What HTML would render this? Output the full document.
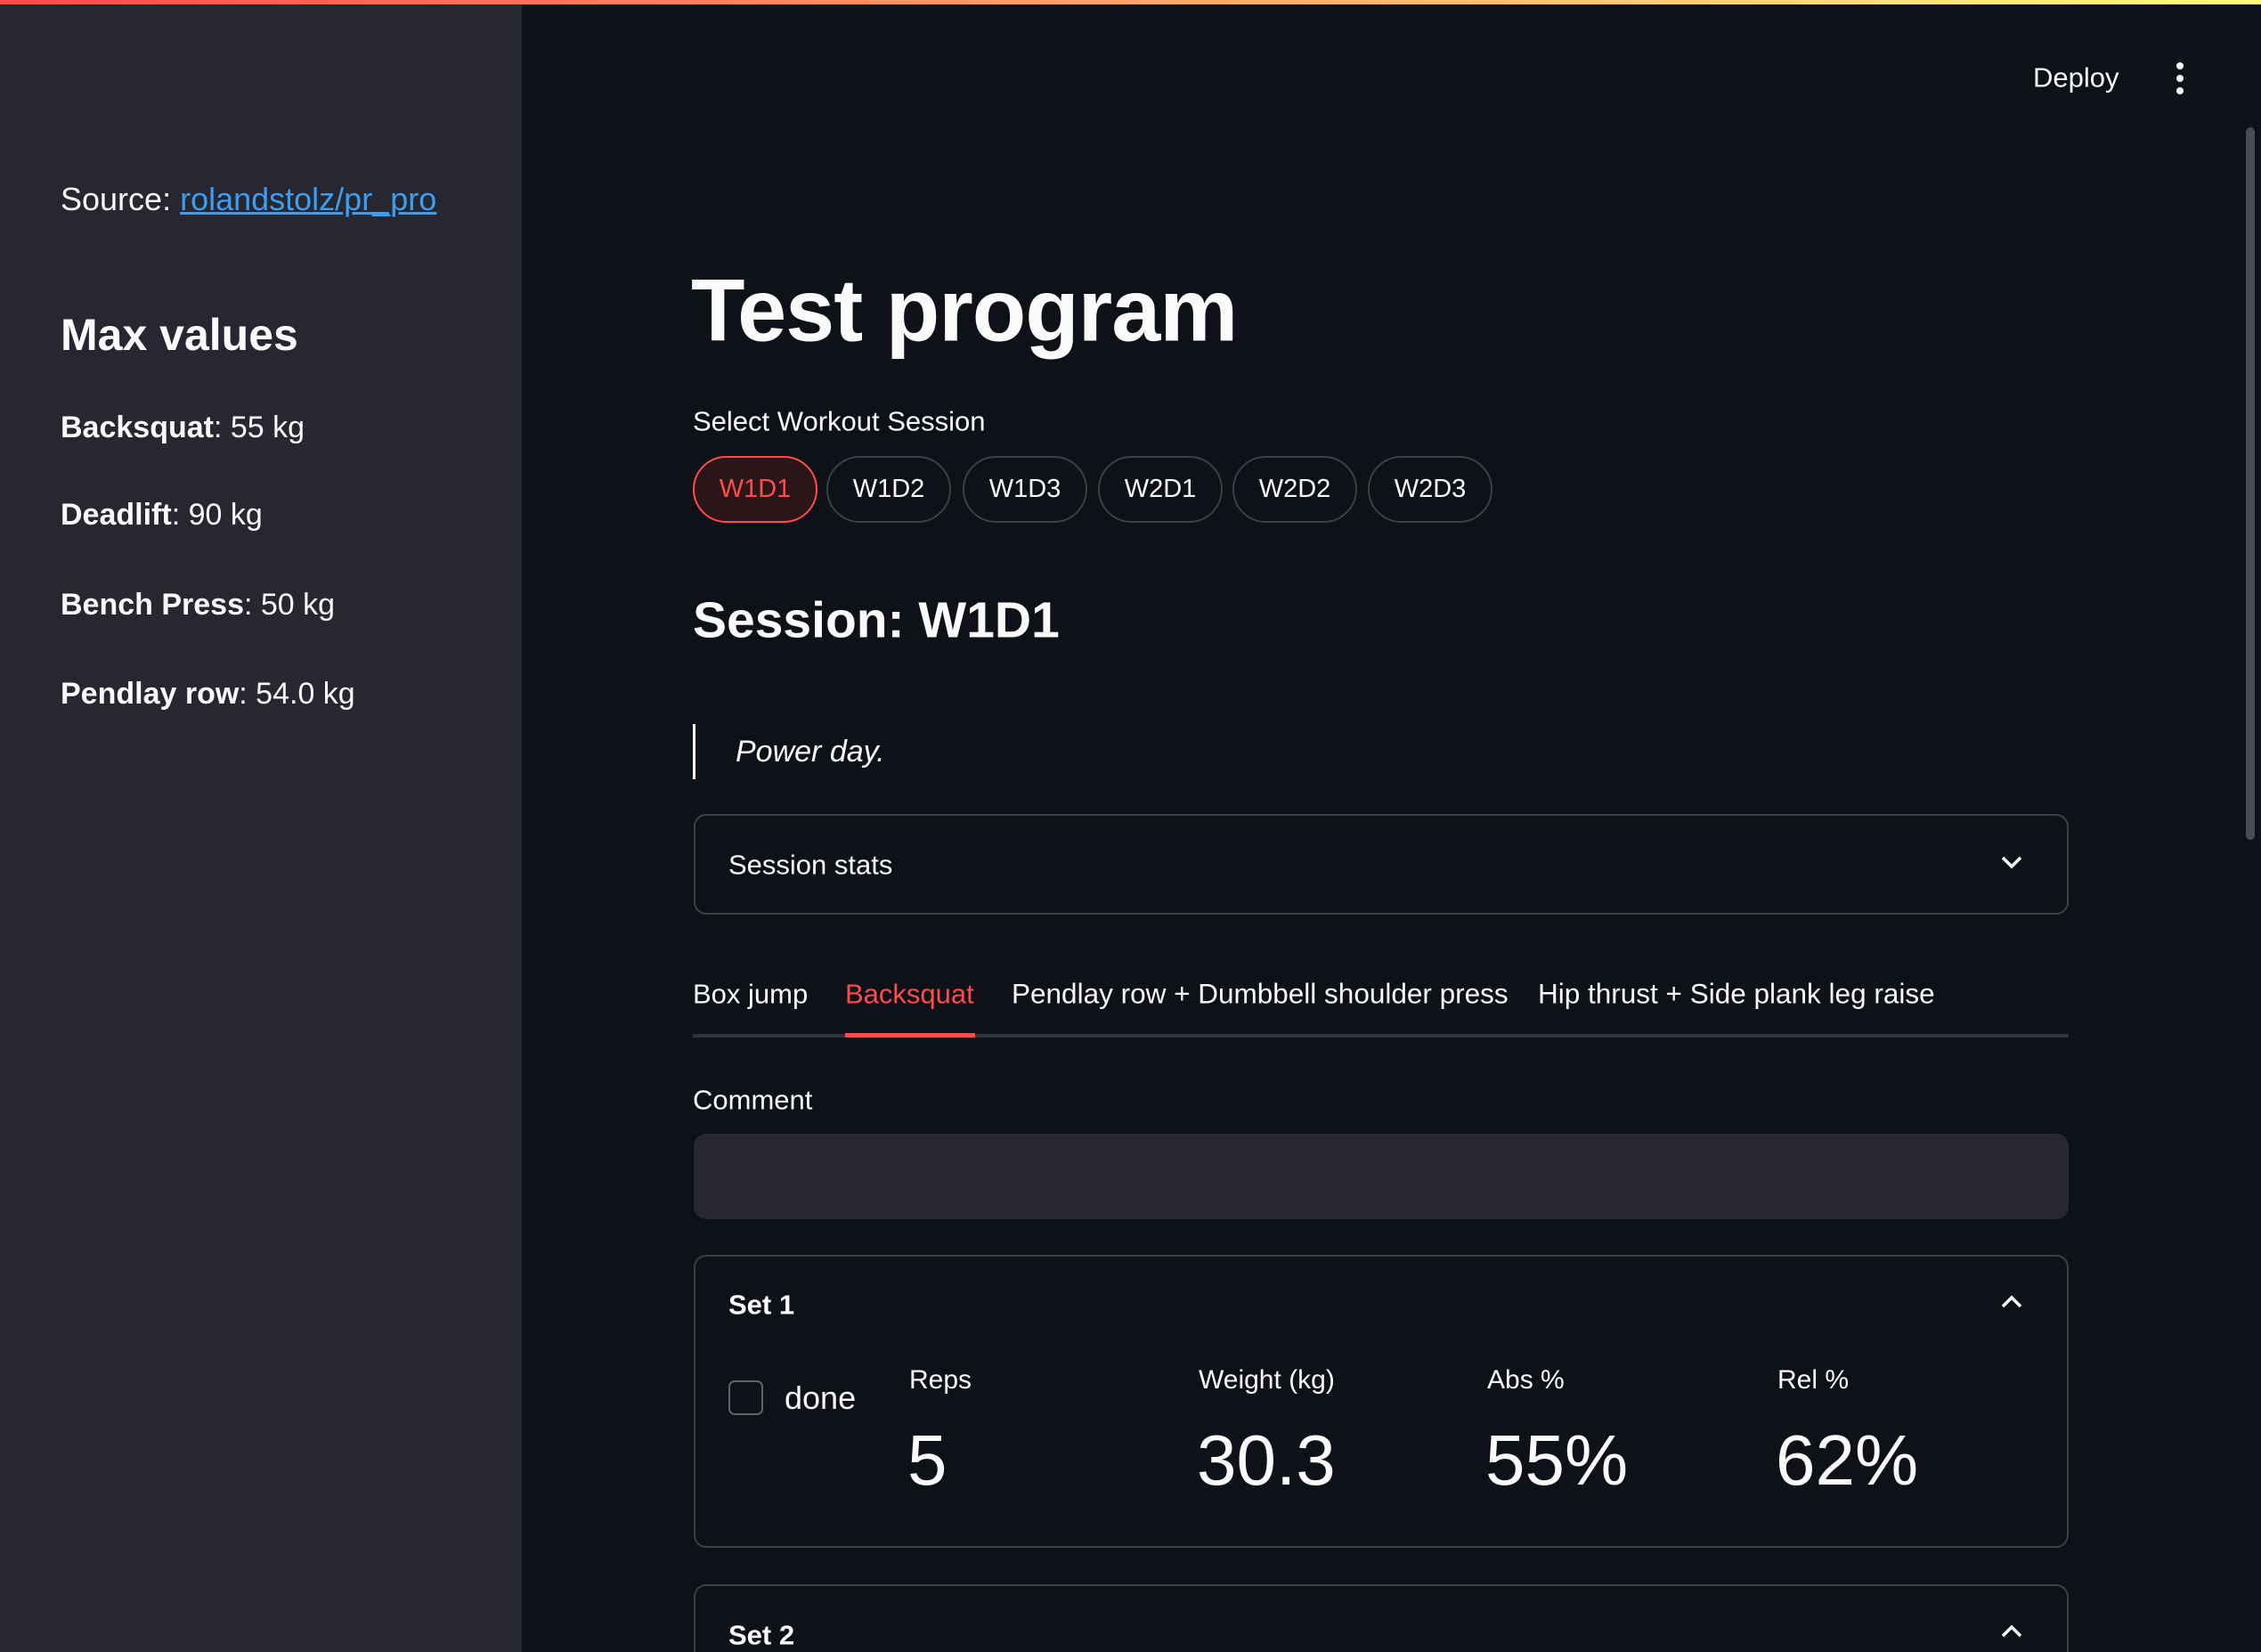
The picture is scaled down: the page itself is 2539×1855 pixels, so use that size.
<!DOCTYPE html>
<html><head><meta charset="utf-8"><style>
*{margin:0;padding:0;box-sizing:border-box}
html,body{width:2539px;height:1855px;overflow:hidden;background:#0e1117;color:#fafafa;font-family:"Liberation Sans",sans-serif}
#w{position:relative;width:2539px;height:1855px;overflow:hidden}
.a{position:absolute;white-space:nowrap}
.topbar{position:absolute;left:0;top:0;width:2539px;height:5px;background:linear-gradient(90deg,#ff4b4b,#fffd80)}
.side{position:absolute;left:0;top:5px;width:586px;height:1850px;background:#262730}
.t{font-size:31px;line-height:1;transform:translateY(-50%)}
.s{font-size:34px}
.pill{position:absolute;top:512px;height:75px;width:140px;border:2px solid rgba(250,250,250,0.2);border-radius:38px;font-size:29px;display:flex;align-items:center;justify-content:center}
.box{position:absolute;left:779px;width:1544px;border:2px solid rgba(250,250,250,0.2);border-radius:14px}
.lbl{font-size:30px}
.val{font-size:80px}
</style></head><body><div id="w">
<div class="topbar"></div>
<div class="side"></div>
<div class="a t" style="left:68px;top:224px;font-size:36px">Source: <span style="color:#3d9df3;text-decoration:underline">rolandstolz/pr_pro</span></div>
<div class="a t" style="left:68px;top:376px;font-size:50px;font-weight:bold">Max values</div>
<div class="a t s" style="left:68px;top:480px"><b>Backsquat</b>: 55 kg</div>
<div class="a t s" style="left:68px;top:578px"><b>Deadlift</b>: 90 kg</div>
<div class="a t s" style="left:68px;top:679px"><b>Bench Press</b>: 50 kg</div>
<div class="a t s" style="left:68px;top:779px"><b>Pendlay row</b>: 54.0 kg</div>

<div class="a t" style="left:2283px;top:87px">Deploy</div>
<svg class="a" style="left:2440px;top:68px" width="16" height="40"><circle cx="8" cy="6" r="4" fill="#fafafa"/><circle cx="8" cy="20" r="4" fill="#fafafa"/><circle cx="8" cy="34" r="4" fill="#fafafa"/></svg>
<div class="a" style="left:2522px;top:143px;width:10px;height:800px;border-radius:5px;background:#4a4c55"></div>

<div class="a t" style="left:776px;top:348px;font-size:99px;font-weight:bold;letter-spacing:-1px">Test program</div>
<div class="a t lbl" style="left:778px;top:473px;font-size:31px">Select Workout Session</div>
<div class="pill" style="left:778px;border-color:#ff4b4b;color:#ff4b4b;background:#2a1619">W1D1</div>
<div class="pill" style="left:928px">W1D2</div>
<div class="pill" style="left:1081px">W1D3</div>
<div class="pill" style="left:1233px">W2D1</div>
<div class="pill" style="left:1384px">W2D2</div>
<div class="pill" style="left:1536px">W2D3</div>
<div class="a t" style="left:778px;top:697px;font-size:57px;font-weight:bold">Session: W1D1</div>
<div class="a" style="left:778px;top:813px;width:3px;height:62px;background:#fafafa"></div>
<div class="a t" style="left:826px;top:844px;font-style:italic;font-size:34px">Power day.</div>

<div class="box" style="top:914px;height:113px"></div>
<div class="a t" style="left:818px;top:971px;font-size:31px">Session stats</div>
<svg class="a" style="left:2245px;top:958px" width="28" height="20"><path d="M4 5 L14 15 L24 5" fill="none" stroke="#fafafa" stroke-width="3.5"/></svg>

<div class="a t" style="left:778px;top:1116px;font-size:31px">Box jump</div>
<div class="a t" style="left:949px;top:1116px;font-size:31px;color:#ff4b4b">Backsquat</div>
<div class="a t" style="left:1136px;top:1116px;font-size:31.5px">Pendlay row + Dumbbell shoulder press</div>
<div class="a t" style="left:1727px;top:1116px;font-size:31.5px">Hip thrust + Side plank leg raise</div>
<div class="a" style="left:778px;top:1161px;width:1545px;height:4px;background:#31333f"></div>
<div class="a" style="left:949px;top:1160px;width:146px;height:5px;background:#ff4b4b"></div>

<div class="a t lbl" style="left:778px;top:1235px;font-size:31px">Comment</div>
<div class="a" style="left:779px;top:1273px;width:1544px;height:96px;background:#262730;border-radius:14px"></div>

<div class="box" style="top:1409px;height:329px"></div>
<div class="a t" style="left:818px;top:1465px;font-weight:bold;font-size:31px">Set 1</div>
<svg class="a" style="left:2245px;top:1452px" width="28" height="20"><path d="M4 15 L14 5 L24 15" fill="none" stroke="#fafafa" stroke-width="3.5"/></svg>
<div class="a" style="left:818px;top:1550px;width:39px;height:39px;border:2px solid rgba(250,250,250,0.35);border-radius:7px"></div>
<div class="a t" style="left:881px;top:1570px;font-size:36px">done</div>
<div class="a t lbl" style="left:1021px;top:1550px">Reps</div>
<div class="a t lbl" style="left:1346px;top:1550px">Weight (kg)</div>
<div class="a t lbl" style="left:1670px;top:1550px">Abs %</div>
<div class="a t lbl" style="left:1996px;top:1550px">Rel %</div>
<div class="a t val" style="left:1019px;top:1640px">5</div>
<div class="a t val" style="left:1344px;top:1640px">30.3</div>
<div class="a t val" style="left:1668px;top:1640px">55%</div>
<div class="a t val" style="left:1994px;top:1640px">62%</div>

<div class="box" style="top:1779px;height:76px;border-bottom:none;border-radius:14px 14px 0 0"></div>
<div class="a t" style="left:818px;top:1836px;font-weight:bold;font-size:31px">Set 2</div>
<svg class="a" style="left:2245px;top:1822px" width="28" height="20"><path d="M4 15 L14 5 L24 15" fill="none" stroke="#fafafa" stroke-width="3.5"/></svg>
</div></body></html>
